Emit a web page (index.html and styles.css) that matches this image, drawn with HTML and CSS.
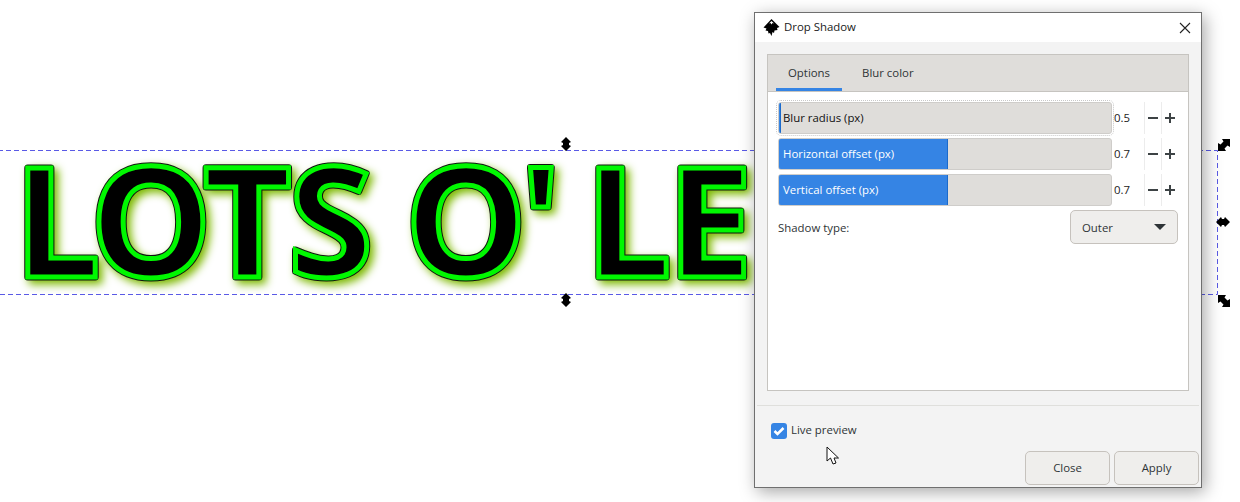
FILE: index.html
```html
<!DOCTYPE html>
<html lang="en">
<head>
    <meta charset="UTF-8">
    <title>Drop Shadow</title>
    <link rel="stylesheet" href="styles.css">
</head>
<body>
    <!-- Canvas with the selected text -->
    <div class="canvas">
        <svg class="artwork" width="760" height="502" viewBox="0 0 760 502">
            <defs>
                <text id="lots" class="lots-text" x="14 90 203 288.500 380 405 520.500 560 585 667" y="277">LOTS O' LE</text>
            </defs>
            <g class="lots-shadow">
                <use href="#lots" class="layer-outline"></use>
                <use href="#lots" class="layer-green"></use>
            </g>
        </svg>

        <svg class="selection-box" width="1240" height="502" viewBox="0 0 1240 502">
            <path d="M-2 150.500H1217.500V294.500H-2"/>
        </svg>

        <svg class="handle handle-top" width="10" height="14" viewBox="0 0 10 14"><path d="M5 0 10 5 8 6V8L10 9 5 14 0 9 2 8V6L0 5Z"/></svg>
        <svg class="handle handle-bottom" width="10" height="14" viewBox="0 0 10 14"><path d="M5 0 10 5 8 6V8L10 9 5 14 0 9 2 8V6L0 5Z"/></svg>
        <svg class="handle handle-right" width="14" height="10" viewBox="0 0 14 10"><path d="M0 5 5 0 6 2H8L9 0 14 5 9 10 8 8H6L5 10Z"/></svg>
        <svg class="handle handle-ne" width="12" height="12" viewBox="0 0 12 12"><path d="M12 0V8L9.500 6.500 6.500 9.500 8 12H0V4L2.500 5.500 5.500 2.500 4 0Z"/></svg>
        <svg class="handle handle-se" width="12" height="12" viewBox="0 0 12 12"><path d="M0 0H8L6.500 2.500 9.500 5.500 12 4V12H4L5.500 9.500 2.500 6.500 0 8Z"/></svg>
    </div>

    <!-- Drop Shadow dialog -->
    <div class="dialog">
        <div class="titlebar">
            <svg class="app-icon" width="17" height="17" viewBox="0 0 17 17">
                <path d="M8.500 0 16.500 8 14 9 14.500 11 11.500 11.500 11 14 9.500 13 8.500 17 7 14 5.500 14.500 5 12 2.500 11.500 3.500 9.500 0.500 8.500Z"/>
                <path class="icon-cap" d="M8.500 2 11 4.500 9.500 4 8.500 5.500 7.500 4 6 4.500Z"/>
            </svg>
            <span class="title">Drop Shadow</span>
            <svg class="close-x" width="12" height="12" viewBox="0 0 12 12"><path d="M1 1 11 11M11 1 1 11"/></svg>
        </div>

        <div class="dialog-body">
            <div class="notebook">
                <div class="tabs">
                    <div class="tab tab-active">Options</div>
                    <div class="tab">Blur color</div>
                </div>
                <div class="tab-page">
                    <div class="spin-row spin-row-focus">
                        <div class="slider"><div class="slider-fill fill-min"></div><span class="slider-label label-dark">Blur radius (px)</span></div>
                        <span class="spin-value">0.5</span>
                        <span class="spin-btn"><i class="minus"></i></span>
                        <span class="spin-btn"><i class="minus"></i><i class="plus"></i></span>
                    </div>
                    <div class="spin-row">
                        <div class="slider"><div class="slider-fill fill-half"></div><span class="slider-label">Horizontal offset (px)</span></div>
                        <span class="spin-value">0.7</span>
                        <span class="spin-btn"><i class="minus"></i></span>
                        <span class="spin-btn"><i class="minus"></i><i class="plus"></i></span>
                    </div>
                    <div class="spin-row">
                        <div class="slider"><div class="slider-fill fill-half"></div><span class="slider-label">Vertical offset (px)</span></div>
                        <span class="spin-value">0.7</span>
                        <span class="spin-btn"><i class="minus"></i></span>
                        <span class="spin-btn"><i class="minus"></i><i class="plus"></i></span>
                    </div>
                    <div class="type-row">
                        <span>Shadow type:</span>
                        <div class="combo"><span>Outer</span><i class="combo-arrow"></i></div>
                    </div>
                </div>
            </div>
        </div>

        <div class="dialog-foot">
            <div class="check-row">
                <span class="check">
                    <svg width="16" height="16" viewBox="0 0 16 16"><path d="M3.500 8 6.500 11 12.500 5"/></svg>
                </span>
                <span class="check-label">Live preview</span>
            </div>
            <div class="actions">
                <div class="btn">Close</div>
                <div class="btn">Apply</div>
            </div>
        </div>
    </div>

    <svg class="cursor" width="14" height="20" viewBox="0 0 14 20"><path d="M1 1V15L4.500 12 7 18 10 17 8 12H12.500Z"/></svg>
</body>
</html>
```

FILE: styles.css
```css
body {
    margin: 0;
    width: 1240px;
    height: 502px;
    overflow: hidden;
    position: relative;
    background-color: white;
    font-family: 'Open Sans', 'Noto Sans', sans-serif;
    font-size: 11.4px;
    color: #2e3436;
}

/* canvas */
.canvas {
    position: absolute;
    inset: 0;
}
.artwork {
    position: absolute;
    left: 0;
    top: 0;
}
.lots-text {
    font-family: 'Open Sans', sans-serif;
    font-weight: 700;
    font-size: 153px;
}
.lots-shadow {
    filter: drop-shadow(4px 4px 4px #7cb800);
}
.layer-outline {
    fill: black;
    stroke: #111;
    stroke-width: 7px;
    stroke-linejoin: round;
}
.layer-green {
    fill: black;
    stroke: #00f800;
    stroke-width: 5px;
    stroke-linejoin: miter;
}
.selection-box {
    position: absolute;
    left: 0;
    top: 0;
    fill: none;
    stroke: #5a5ae6;
    stroke-width: 1px;
    stroke-dasharray: 5 3;
}
.handle {
    position: absolute;
    fill: black;
}
.handle-top { left: 561px; top: 137px; }
.handle-bottom { left: 561px; top: 293px; }
.handle-right { left: 1216px; top: 217px; }
.handle-ne { left: 1218px; top: 139px; }
.handle-se { left: 1218px; top: 295px; }

/* dialog */
.dialog {
    position: absolute;
    left: 754px;
    top: 12px;
    width: 446px;
    height: 474px;
    display: flex;
    flex-direction: column;
    background-color: #f3f3f3;
    border: 1px solid #6f6f6f;
    box-shadow: 3px 4px 16px rgba(0, 0, 0, 0.35);
}
.titlebar {
    display: flex;
    align-items: center;
    height: 29px;
    padding: 0 10px 0 8px;
    background-color: white;
}
.app-icon {
    margin-right: 4px;
}
.icon-cap {
    fill: white;
}
.title {
    flex: 1;
    color: #1a1a1a;
    padding-bottom: 2px;
}
.close-x {
    stroke: #222;
    stroke-width: 1.1px;
    fill: none;
}
.dialog-body {
    flex: 1;
    padding: 12px 12px 13px;
}
.notebook {
    height: 335px;
    display: flex;
    flex-direction: column;
    background-color: white;
    border: 1px solid #c6c4c0;
}
.tabs {
    display: flex;
    height: 36px;
    padding-left: 8px;
    background-color: #dfddda;
    border-bottom: 1px solid #c6c4c0;
}
.tab {
    padding: 0 12px;
    line-height: 35px;
    margin-right: 8px;
}
.tab-active {
    box-shadow: inset 0 -3px 0 #3584e4;
}
.tab-page {
    flex: 1;
    padding: 10px 10px 0;
    display: flex;
    flex-direction: column;
    gap: 4px;
}
.spin-row {
    display: flex;
    align-items: stretch;
    height: 32px;
}
.spin-row-focus .slider {
    outline: 1px dotted #c8c8c8;
    outline-offset: 1px;
}
.slider {
    position: relative;
    width: 334px;
    box-sizing: border-box;
    background-color: #dfddda;
    border: 1px solid #cfcdca;
    border-radius: 3px;
    overflow: hidden;
    display: flex;
    align-items: center;
}
.slider-fill {
    position: absolute;
    left: -1px;
    top: -1px;
    bottom: -1px;
    background-color: #3584e4;
    border: 1px solid #1b6acb;
    border-radius: 3px 0 0 3px;
    box-sizing: border-box;
}
.fill-min { width: 3px; }
.fill-half { width: 170px; }
.slider-label {
    position: relative;
    margin-left: 4px;
    margin-bottom: 2px;
    color: white;
}
.label-dark {
    color: #111;
}
.spin-value {
    width: 32px;
    padding-left: 2px;
    box-sizing: border-box;
    line-height: 32px;
    color: #222;
}
.spin-btn {
    width: 17px;
    position: relative;
    border-left: 1px solid #ececec;
    box-sizing: border-box;
}
.minus, .plus {
    position: absolute;
    left: 3px;
    top: 15px;
    width: 10px;
    height: 2px;
    background-color: #3d4345;
}
.plus {
    left: 7px;
    top: 11px;
    width: 2px;
    height: 10px;
}
.type-row {
    display: flex;
    justify-content: space-between;
    align-items: center;
    height: 34px;
}
.combo {
    width: 108px;
    height: 34px;
    box-sizing: border-box;
    padding: 0 11px;
    display: flex;
    justify-content: space-between;
    align-items: center;
    background-color: #efeeec;
    border: 1px solid #c6c2bd;
    border-radius: 5px;
}
.combo-arrow {
    border-left: 6px solid transparent;
    border-right: 6px solid transparent;
    border-top: 6px solid #2e3436;
}

/* foot */
.dialog-foot {
    height: 82px;
    box-sizing: border-box;
    margin: 0 2px;
    border-top: 1px solid #dfdfdc;
    padding: 0 0 2px 14px;
    display: flex;
    flex-direction: column;
    justify-content: space-between;
}
.check-row {
    display: flex;
    align-items: center;
    margin-top: 16px;
    gap: 4px;
}
.check {
    width: 16px;
    height: 16px;
    background-color: #3584e4;
    border-radius: 3px;
}
.check svg {
    display: block;
    fill: none;
    stroke: white;
    stroke-width: 2.500px;
}
.check-label {
    padding-bottom: 2px;
}
.actions {
    display: flex;
    justify-content: flex-end;
    gap: 4px;
}
.btn {
    width: 85px;
    height: 34px;
    box-sizing: border-box;
    line-height: 32px;
    text-align: center;
    background-color: #efeeec;
    border: 1px solid #c6c2bd;
    border-radius: 5px;
}
.cursor {
    position: absolute;
    left: 826px;
    top: 446px;
    fill: white;
    stroke: #111;
    stroke-width: 1px;
}
```
